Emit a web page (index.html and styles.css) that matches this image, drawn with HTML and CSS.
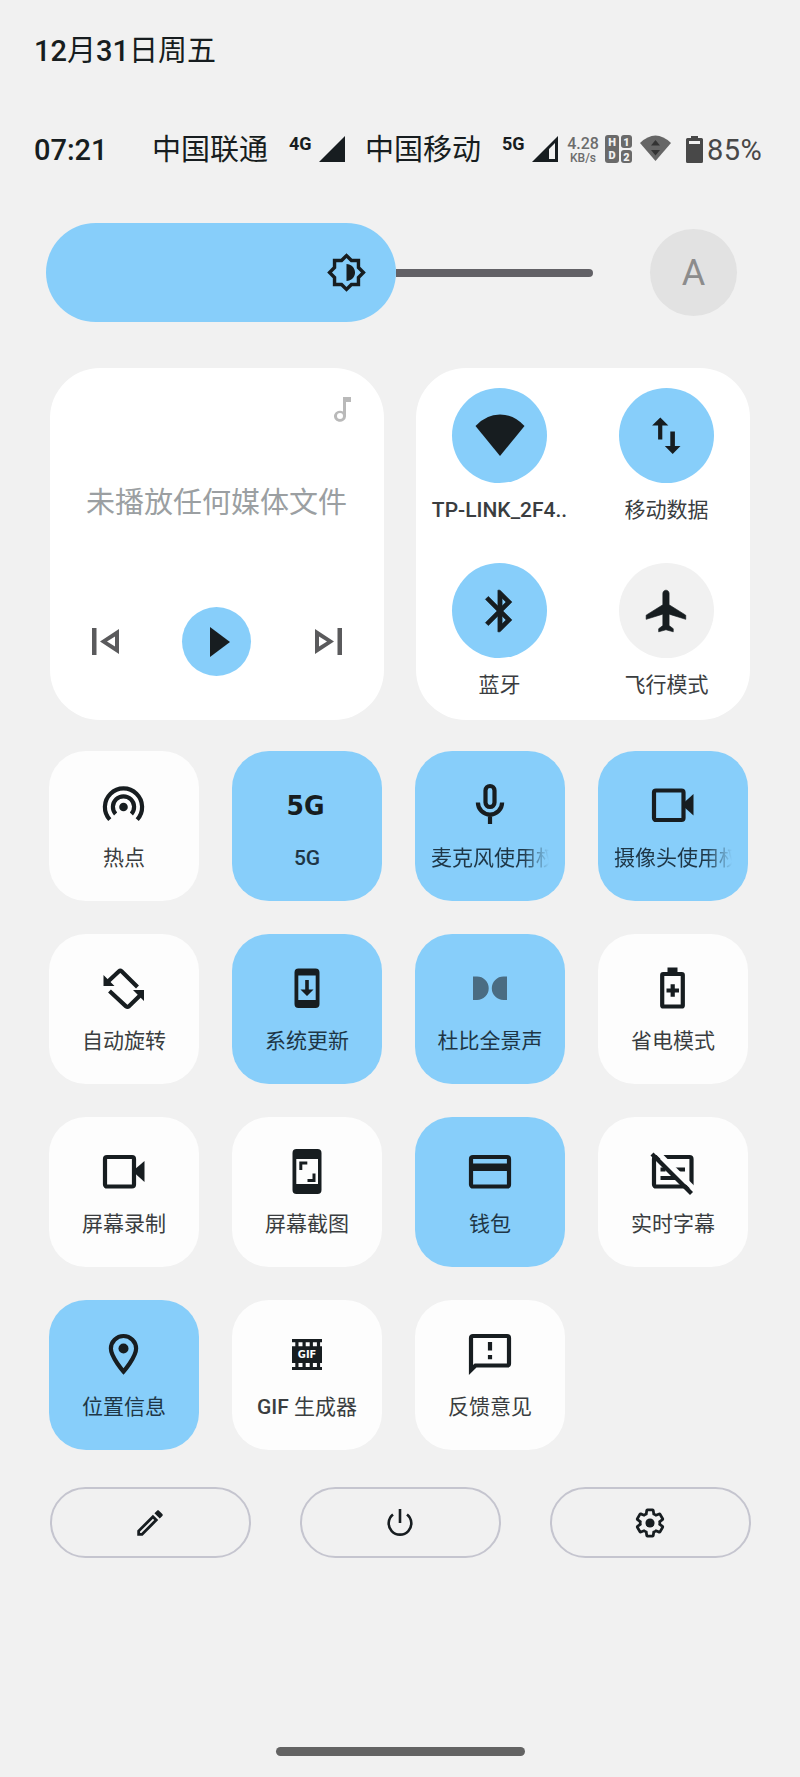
FILE: index.html
```html
<!DOCTYPE html>
<html lang="zh-CN">
    <head>
        <meta charset="utf-8">
        <title>快捷设置</title>
        <link rel="stylesheet" href="styles.css">
    </head>
    <body>
    	<div class="date"><b>12</b>月<b>31</b>日周五</div>

    	<div class="status">
    		<span class="time">07:21</span>
    		<span class="carrier">中国联通</span>
    		<span class="net">4G</span>
    		<svg class="signal" viewBox="0 0 26 26"><path d="M26 0v26H0z"/></svg>
    		<span class="carrier second">中国移动</span>
    		<span class="net">5G</span>
    		<svg class="signal" viewBox="0 0 26 26"><path fill-rule="evenodd" d="M26 0v26H0zM23 7l-6 6v10h6z"/></svg>
    		<div class="speed"><span>4.28</span><i>KB/s</i></div>
    		<svg class="hd" viewBox="0 0 27 28">
    			<rect width="14" height="28" rx="3"/>
    			<rect x="16" width="11" height="13" rx="3"/>
    			<rect x="16" y="15" width="11" height="13" rx="3"/>
    			<text x="7" y="11">H</text>
    			<text x="7" y="24">D</text>
    			<text x="21.5" y="10.5">1</text>
    			<text x="21.5" y="25.500">2</text>
    		</svg>
    		<svg class="wifi-s" viewBox="0 0 31 26"><path fill="#666" d="M0 8Q15.500-7 31 8L15.500 26z"/><path fill="#333" d="M11 10.500h9L15.500 5zM11 15h9l-4.500 5.500z"/></svg>
    		<svg class="bat" viewBox="0 0 17 27"><path fill-rule="evenodd" d="M5 0h7v2h3.500q1.500 0 1.500 1.500v22q0 1.500-1.500 1.500h-14Q0 27 0 25.500v-22Q0 2 1.500 2H5zM3 5v3h11V5z"/></svg>
    		<span class="percent">85%</span>
    	</div>

    	<div class="bright">
    		<div class="level">
    			<svg viewBox="0 0 24 24"><path d="M20 8.690V4h-4.690L12 .69 8.690 4H4v4.690L.69 12 4 15.310V20h4.690L12 23.310 15.310 20H20v-4.690L23.310 12 20 8.690zm-2 5.790V18h-3.520L12 20.480 9.520 18H6v-3.520L3.520 12 6 9.520V6h3.520L12 3.520 14.480 6H18v3.520L20.480 12 18 14.480zM12 7v10c2.760 0 5-2.240 5-5s-2.240-5-5-5z"/></svg>
    		</div>
    		<div class="track"></div>
    		<div class="auto">A</div>
    	</div>

    	<div class="cards">
    		<div class="card media">
    			<svg class="note" viewBox="0 0 17 25"><path d="M9 0h8v5h-5v14.500a6 5.500 0 1 1-3-5zM6 16a3 3 0 1 0 0 6 3 3 0 0 0 0-6z" fill-rule="evenodd"/></svg>
    			<p>未播放任何媒体文件</p>
    			<div class="ctrl">
    				<svg class="skip" viewBox="0 0 27 27"><path fill-rule="evenodd" d="M0 0h4.500v27H0zM27 1v25L8 13.500zM23 8.500l-8 5 8 5z"/></svg>
    				<span class="play"><svg viewBox="0 0 20 30"><path d="M0 0l20 15L0 30z"/></svg></span>
    				<svg class="skip" viewBox="0 0 27 27"><path fill-rule="evenodd" d="M27 0h-4.500v27H27zM0 1v25l19-12.500zM4 8.500l8 5-8 5z"/></svg>
    			</div>
    		</div>
    		<ul class="card conn">
    			<li>
    				<span class="round on"><svg viewBox="0 0 50 50"><path d="M25 45L.5 15Q11 3.500 25 3.500T49.500 15z"/></svg></span>
    				<em><b>TP-LINK_2F4..</b></em>
    			</li>
    			<li>
    				<span class="round on"><svg viewBox="0 0 50 50"><path d="M18.300 6.500l8 8h-6v14h-4.200v-14h-6zM28.300 20.500h4.600V35h5.600l-7.800 8-7.900-8h5.500z"/></svg></span>
    				<em>移动数据</em>
    			</li>
    			<li>
    				<span class="round on"><svg class="thick" viewBox="0 0 24 24"><path d="M17.710 7.710L12 2h-1v7.590L6.410 5 5 6.410 10.590 12 5 17.590 6.410 19 11 14.410V22h1l5.710-5.710-4.300-4.290 4.300-4.290zM13 5.830l1.880 1.880L13 9.590V5.830zm1.880 10.460L13 18.170v-3.760l1.880 1.880z"/></svg></span>
    				<em>蓝牙</em>
    			</li>
    			<li>
    				<span class="round"><svg class="thick" viewBox="0 0 24 24"><path d="M21 16v-2l-8-5V3.500c0-.83-.67-1.500-1.500-1.500S10 2.670 10 3.500V9l-8 5v2l8-2.500V19l-2 1.500V22l3.500-1 3.500 1v-1.500L13 19v-5.500l8 2.500z"/></svg></span>
    				<em>飞行模式</em>
    			</li>
    		</ul>
    	</div>

    	<ul class="tiles">
    		<li>
    			<svg class="line" viewBox="0 0 50 50"><path d="M10.800 39.600a18.600 18.600 0 1 1 27.400 0M16.600 34a10.600 10.600 0 1 1 15.800 0"/><circle class="fill" cx="24.500" cy="27" r="4.300"/></svg>
    			<em>热点</em>
    		</li>
    		<li class="on">
    			<svg viewBox="0 0 50 50"><text class="g5" x="4.500" y="35" textLength="38" lengthAdjust="spacingAndGlyphs">5G</text></svg>
    			<em><b>5G</b></em>
    		</li>
    		<li class="on">
    			<svg class="line" viewBox="0 0 50 50"><rect x="20.500" y="6" width="9" height="21" rx="4.500"/><path d="M12.900 22.500a12.100 12.100 0 0 0 24.200 0M25 35v9"/></svg>
    			<em class="long">麦克风使用权限</em>
    		</li>
    		<li class="on">
    			<svg class="line" viewBox="0 0 50 50"><rect x="6" y="10.500" width="29.500" height="29.500" rx="2"/><path class="fill" d="M45.500 14v21.500l-10-9v-3.500z"/></svg>
    			<em class="long">摄像头使用权限</em>
    		</li>
    		<li>
    			<svg class="line" viewBox="0 0 50 50"><path d="M8 19.500L20 8.300q1.300-1.200 2.600 0L38.500 24M10.500 28L27 43.300q1.500 1.200 3 0L42 31.500"/><path class="fill" d="M4.500 12v11h11zM45 38V27H34z"/></svg>
    			<em>自动旋转</em>
    		</li>
    		<li class="on">
    			<svg viewBox="0 0 50 50"><path fill-rule="evenodd" d="M16.500 5.500h17q4 0 4 4V41q0 4-4 4h-17q-4 0-4-4V9.500q0-4 4-4zM16.300 12.500V37h17.400V12.500zM23.200 17v9.500h-4.700L25 33l6.500-6.500h-4.700V17z"/></svg>
    			<em>系统更新</em>
    		</li>
    		<li class="on">
    			<svg class="dolby" viewBox="0 0 50 50"><path d="M8 13.500h4a11.700 11.700 0 0 1 0 23.400H8zM42 13.500h-3.500a11.700 11.700 0 0 0 0 23.400H42z"/></svg>
    			<em>杜比全景声</em>
    		</li>
    		<li>
    			<svg class="line" viewBox="0 0 50 50"><rect x="14.200" y="11" width="20.600" height="32.500" rx="1"/><path class="fill" d="M19.500 4.500h10V11h-10z"/><path d="M18.500 27.500h12.500M24.700 21.300v12.500"/></svg>
    			<em>省电模式</em>
    		</li>
    		<li>
    			<svg class="line" viewBox="0 0 50 50"><rect x="6" y="11" width="29" height="29.500" rx="2"/><path class="fill" d="M45.500 15v21l-10-9v-3.500z"/></svg>
    			<em>屏幕录制</em>
    		</li>
    		<li>
    			<svg viewBox="0 0 50 50"><path fill-rule="evenodd" d="M14.500 3h21q4 0 4 4v37q0 4-4 4h-21q-4 0-4-4V7q0-4 4-4zM14.300 13v25h21.700V13zM17.300 15.500h8v3h-5V24h-3zM33.500 36h-8v-3h5v-5.500h3z"/></svg>
    			<em>屏幕截图</em>
    		</li>
    		<li class="on">
    			<svg class="line" viewBox="0 0 50 50"><rect x="6" y="11" width="38" height="29.500" rx="2"/><path class="fill" d="M6 17.500h38V25H6z"/></svg>
    			<em>钱包</em>
    		</li>
    		<li>
    			<svg class="line" viewBox="0 0 50 50"><rect x="6" y="11" width="37.500" height="29.500" rx="2"/><path d="M12.500 23.500h5M26 23.500h11M12.500 32h16"/><path class="gap" d="M6 3l45 45"/><path d="M4 8l39.500 39.500"/></svg>
    			<em>实时字幕</em>
    		</li>
    		<li class="on">
    			<svg class="line" viewBox="0 0 50 50"><path d="M24.500 7a12.600 12.600 0 0 1 12.600 12.600c0 8.500-12.600 23-12.600 23s-12.600-14.500-12.600-23A12.600 12.600 0 0 1 24.500 7z"/><circle class="fill" cx="24.500" cy="19.500" r="5"/></svg>
    			<em>位置信息</em>
    		</li>
    		<li>
    			<svg viewBox="0 0 50 50"><path d="M10 10h30v31H10z"/><path class="hole" d="M9.300 15.300h32M9.300 36h32"/><text class="gif" x="15.800" y="29.300" textLength="18.500" lengthAdjust="spacingAndGlyphs">GIF</text></svg>
    			<em><b>GIF</b> 生成器</em>
    		</li>
    		<li>
    			<svg class="line" viewBox="0 0 50 50"><path d="M6 41V9q0-2 2-2h34q2 0 2 2v25.500q0 2-2 2H10.500z"/><path d="M25 13v8.500M25 26v4.200"/></svg>
    			<em>反馈意见</em>
    		</li>
    	</ul>

    	<div class="foot">
    		<a><svg viewBox="0 0 24 24"><path d="M14.060 9.020l.92.92L5.920 19H5v-.92l9.060-9.060M17.660 3c-.25 0-.51.1-.7.29l-1.830 1.830 3.750 3.750 1.830-1.830c.39-.39.39-1.020 0-1.410l-2.340-2.340c-.2-.2-.45-.29-.71-.29zm-3.600 3.190L3 17.250V21h3.750L17.810 9.940l-3.750-3.750z"/></svg></a>
    		<a><svg class="power" viewBox="0 0 34 34"><path d="M17 3v14M10 8.500a11.300 11.300 0 1 0 14 0"/></svg></a>
    		<a><svg class="gear" viewBox="-1 -1 26 26"><path d="M19.430 12.980c.04-.32.07-.64.07-.98 0-.34-.03-.66-.07-.98l2.110-1.650c.19-.15.24-.42.12-.64l-2-3.460c-.09-.16-.26-.25-.44-.25-.06 0-.12.01-.17.03l-2.490 1c-.52-.4-1.080-.73-1.690-.98l-.38-2.650C14.460 2.180 14.250 2 14 2h-4c-.25 0-.46.18-.49.42l-.38 2.650c-.61.25-1.170.59-1.690.98l-2.490-1c-.06-.02-.12-.03-.18-.03-.17 0-.34.09-.43.25l-2 3.460c-.13.22-.07.49.12.64l2.110 1.650c-.04.32-.07.65-.07.98 0 .33.03.66.07.98l-2.110 1.650c-.19.15-.24.42-.12.64l2 3.460c.09.16.26.25.44.25.06 0 .12-.01.17-.03l2.490-1c.52.4 1.080.73 1.690.98l.38 2.650c.03.24.24.42.49.42h4c.25 0 .46-.18.49-.42l.38-2.650c.61-.25 1.170-.59 1.690-.98l2.490 1c.06.02.12.03.18.03.17 0 .34-.09.43-.25l2-3.460c.12-.22.07-.49-.12-.64l-2.110-1.650z"/><circle cx="12" cy="12" r="3.500"/></svg></a>
    	</div>

    	<div class="home"></div>
    </body>
</html>
```
FILE: styles.css
```css
*{
	margin: 0;
	padding: 0;
	box-sizing: border-box;
	list-style-type: none;
	font-style: normal;
}
body{
	width: 800px;
	height: 1777px;
	background: #f1f1f1;
	color: #171d20;
	font-family: Roboto, "Noto Sans CJK SC", sans-serif;
	font-size: 29px;
	display: flex;
	flex-direction: column;
	overflow: hidden;
}
svg{
	display: block;
	flex: none;
	fill: #171d20;
}
b{
	font-weight: 500;
}
.date{
	margin: 31px 0 0 34px;
	height: 40px;
	line-height: 40px;
}

/* 状态栏 */
.status{
	display: flex;
	align-items: center;
	height: 40px;
	margin: 59px 0 0 34px;
	line-height: 40px;
	white-space: nowrap;
}
.time{
	width: 118px;
	font-weight: 500;
}
.carrier{
	width: 137px;
}
.second{
	margin-left: 20px;
}
.net{
	width: 30px;
	height: 40px;
	line-height: 28px;
	font-size: 18px;
	font-weight: 700;
}
.signal{
	width: 26px;
	height: 26px;
	margin-top: -2px;
}
.speed{
	width: 34px;
	margin-left: 8px;
	text-align: center;
	color: #6c6c6c;
	font-weight: 500;
}
.speed span, .speed i{
	display: block;
	font-size: 16px;
	line-height: 15px;
}
.speed i{
	font-size: 12px;
	line-height: 14px;
}
.hd{
	width: 27px;
	height: 28px;
	margin: -2px 0 0 5px;
	fill: #6a6a6a;
}
.hd text{
	fill: #f1f1f1;
	font-size: 11px;
	font-weight: 900;
	text-anchor: middle;
}
.wifi-s{
	width: 31px;
	height: 26px;
	margin: -4px 0 0 8px;
}
.bat{
	width: 17px;
	height: 27px;
	margin: -2px 0 0 15px;
	fill: #484848;
}
.percent{
	margin-left: 4px;
	color: #484848;
	letter-spacing: .5px;
}

/* 亮度条 */
.bright{
	display: flex;
	align-items: center;
	height: 99px;
	margin: 53px 0 0 46px;
}
.level{
	display: flex;
	align-items: center;
	justify-content: flex-end;
	width: 350px;
	height: 99px;
	padding-right: 29px;
	border-radius: 50px;
	background: #87cefa;
}
.level svg{
	width: 41px;
	height: 41px;
}
.track{
	width: 197px;
	height: 8px;
	border-radius: 0 4px 4px 0;
	background: #626166;
}
.auto{
	width: 87px;
	height: 87px;
	margin-left: 57px;
	border-radius: 50%;
	background: #e2e2e2;
	color: #8c8c8c;
	font-size: 36px;
	line-height: 88px;
	text-align: center;
}

.cards{
	display: flex;
	justify-content: space-between;
	margin: 46px 50px 0 49.500px;
}
.card{
	width: 334px;
	height: 352px;
	border-radius: 50px;
	background: #fff;
}
.media{
	display: flex;
	flex-direction: column;
}
.note{
	width: 17px;
	height: 25px;
	margin: 29px 33px 0 auto;
	fill: #b9b9b9;
}
.media p{
	margin-top: 61px;
	line-height: 40px;
	text-align: center;
	color: #9b9fa2;
}
.ctrl{
	display: flex;
	align-items: center;
	justify-content: space-between;
	margin: 84px 42px 0;
}
.skip{
	width: 27px;
	height: 27px;
	fill: #5a5a5c;
}
.play{
	display: flex;
	align-items: center;
	padding-left: 28px;
	width: 69px;
	height: 69px;
	border-radius: 50%;
	background: #87cefa;
}
.play svg{
	width: 20px;
	height: 30px;
}
.conn{
	display: grid;
	grid-template-columns: 167px 167px;
	grid-template-rows: 175px 152px;
	padding-top: 20px;
}
.conn li{
	display: flex;
	flex-direction: column;
	align-items: center;
}
.round{
	display: flex;
	align-items: center;
	justify-content: center;
	width: 95px;
	height: 95px;
	border-radius: 50%;
	background: #f1f1f1;
}
.round svg{
	width: 50px;
	height: 50px;
}
.thick{
	stroke: #171d20;
	stroke-width: .3px;
}
em{
	font-size: 21px;
	line-height: 30px;
	font-weight: 400;
	color: #3a3d40;
	white-space: nowrap;
}
.conn em{
	margin-top: 12px;
}

/* 开关 */
.tiles{
	display: grid;
	grid-template-columns: repeat(4, 150px);
	grid-auto-rows: 150px;
	gap: 33px;
	margin: 31px 0 0 49px;
}
.tiles li{
	display: flex;
	flex-direction: column;
	align-items: center;
	padding-top: 29px;
	border-radius: 37px;
	background: #fdfdfd;
}
.tiles svg{
	width: 50px;
	height: 50px;
}
.tiles em{
	margin-top: 13px;
}
.round.on, .tiles .on{
	background: #87cefa;
}
.on em{
	color: #1e3646;
}
.tiles .long{
	width: 118px;
	overflow: hidden;
	-webkit-mask-image: linear-gradient(90deg, #000 78%, transparent);
	mask-image: linear-gradient(90deg, #000 78%, transparent);
}
.line{
	fill: none;
	stroke: #171d20;
	stroke-width: 4.200px;
}
.line .fill{
	fill: #171d20;
	stroke: none;
}
.line .gap{
	stroke: #fdfdfd;
	stroke-width: 5px;
}
.g5{
	font: bold 27px "DejaVu Sans", sans-serif;
}
.gif{
	fill: #fdfdfd;
	font: bold 10px "DejaVu Sans", sans-serif;
}
.hole{
	stroke: #fdfdfd;
	stroke-width: 4px;
	stroke-dasharray: 4 3.200;
}
.tiles .dolby{
	fill: #4a6c82;
}

.foot{
	display: flex;
	justify-content: space-between;
	margin: 37px 49.500px 0;
}
.foot a{
	display: flex;
	align-items: center;
	justify-content: center;
	width: 201px;
	height: 71px;
	border: 2px solid #c5c5cf;
	border-radius: 36px;
}
.foot svg{
	width: 34px;
	height: 34px;
}
.power, .foot .gear path{
	fill: none;
	stroke: #171d20;
	stroke-width: 2.600px;
}
.foot .gear path{
	stroke-width: 2.100px;
}
.home{
	width: 249px;
	height: 9px;
	margin: 189px auto 0;
	border-radius: 5px;
	background: #636363;
}
```
